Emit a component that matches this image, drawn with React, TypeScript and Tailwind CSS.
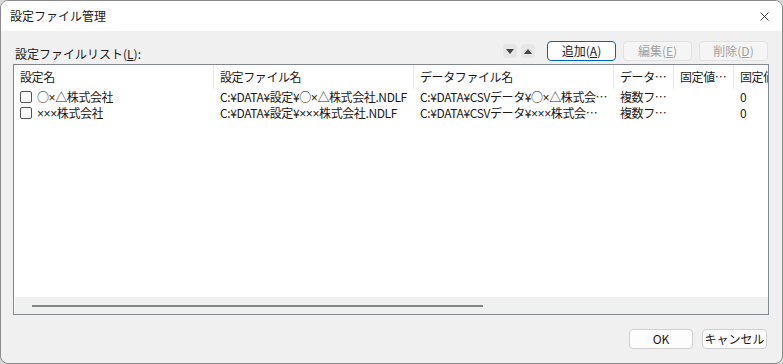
import { X } from 'lucide-react';

const font = "font-['Noto_Sans_CJK_JP','Noto_Sans',sans-serif]";

const columns = [
  { label: '設定名', w: 'w-[200px]' },
  { label: '設定ファイル名', w: 'w-[200px]' },
  { label: 'データファイル名', w: 'w-[200px]' },
  { label: 'データ選択方法', w: 'w-[60px]' },
  { label: '固定値設定', w: 'w-[60px]' },
  { label: '固定値', w: 'w-[60px]' },
];

const rows = [
  {
    name: '○×△株式会社',
    file: 'C:¥DATA¥設定¥○×△株式会社.NDLF',
    data: 'C:¥DATA¥CSVデータ¥○×△株式会社.csv',
    sel: '複数ファイル',
    fixed1: '',
    fixed2: '0',
  },
  {
    name: '×××株式会社',
    file: 'C:¥DATA¥設定¥×××株式会社.NDLF',
    data: 'C:¥DATA¥CSVデータ¥×××株式会社.csv',
    sel: '複数ファイル',
    fixed1: '',
    fixed2: '0',
  },
];

// the × sign is narrow in the original font, Noto CJK makes it full width
function Txt({ text }: { text: string }) {
  const parts = text.split(/(×)/);
  return (
    <>
      {parts.map((p, i) =>
        p === '×' ? (
          <span key={i} className="font-['Liberation_Sans',sans-serif]">×</span>
        ) : (
          <span key={i}>{p}</span>
        )
      )}
    </>
  );
}

function SmallArrow({ up }: { up?: boolean }) {
  return (
    <div className="w-[14px] h-[14px] rounded-[3px] bg-[#e6e6e6] flex items-center justify-center">
      <svg width="8" height="5" viewBox="0 0 8 5">
        {up ? <polygon points="0,5 8,5 4,0" fill="#444" /> : <polygon points="0,0 8,0 4,5" fill="#444" />}
      </svg>
    </div>
  );
}

function Btn({ children, primary, disabled, w = 'w-[69px]' }: { children: React.ReactNode; primary?: boolean; disabled?: boolean; w?: string }) {
  const cls = primary
    ? 'border-[#0067c0] bg-[#fdfdfd] text-[#1a1a1a]'
    : disabled
    ? 'border-[#e2e2e2] bg-[#f5f5f5] text-[#a2a2a2]'
    : 'border-[#d0d0d0] bg-[#fdfdfd] text-[#1a1a1a]';
  return (
    <div className={`${w} h-[20px] rounded-[4px] border flex items-center justify-center text-[12px] leading-none ${cls}`}>
      {children}
    </div>
  );
}

export default function App() {
  return (
    <div className={`w-[783px] h-[364px] bg-[#d8d8d8] ${font}`}>
      <div className="w-[783px] h-[364px] flex flex-col border border-[#8c8c8c] rounded-[8px] overflow-hidden bg-[#f0f0f0]">
        {/* title bar */}
        <div className="h-[30px] bg-white flex items-center justify-between pl-[9px] pr-[10px] shrink-0">
          <span className="text-[12px] text-[#1a1a1a]">設定ファイル管理</span>
          <X size={15} strokeWidth={1.3} className="text-[#1a1a1a]" />
        </div>

        <div className="flex-1 flex flex-col px-[12px] pt-[10px]">
          {/* toolbar */}
          <div className="h-[20px] flex items-end">
            <span className="text-[12px] leading-none pl-[2px] text-[#1a1a1a] mb-[1px]">
              設定ファイルリスト(<span className="underline">L</span>):
            </span>
            <div className="flex-1" />
            <div className="flex items-center gap-[4px] self-center mr-[12px]">
              <SmallArrow />
              <SmallArrow up />
            </div>
            <div className="flex gap-[7px] mr-[2px]">
              <Btn primary>追加(<span className="underline">A</span>)</Btn>
              <Btn disabled>編集(<span className="underline">E</span>)</Btn>
              <Btn disabled>削除(<span className="underline">D</span>)</Btn>
            </div>
          </div>

          {/* list */}
          <div className="mt-[3px] w-[756px] h-[251px] border border-[#828790] bg-white flex flex-col overflow-hidden">
            <div className="flex-1 overflow-hidden tracking-[-0.4px]">
              <div className="flex h-[24px] whitespace-nowrap">
                {columns.map((c, i) => (
                  <div
                    key={i}
                    className={`${c.w} shrink-0 h-full flex items-center pl-[6px] pr-[3px] text-[12px] text-[#1a1a1a] overflow-hidden ${
                      i < columns.length - 1 ? 'border-r border-[#e5e5e5]' : ''
                    }`}
                  >
                    <span className={i === columns.length - 1 ? 'overflow-hidden' : 'truncate'}>{c.label}</span>
                  </div>
                ))}
              </div>
              {rows.map((r, i) => (
                <div key={i} className="flex h-[16px] items-center text-[12px] text-[#1a1a1a] whitespace-nowrap leading-none">
                  <div className="w-[200px] shrink-0 flex items-center pl-[6px] gap-[5px] overflow-hidden">
                    <div className="w-[12px] h-[12px] rounded-[2px] border border-[#555] bg-white shrink-0" />
                    <span className="truncate"><Txt text={r.name} /></span>
                  </div>
                  <div className="w-[200px] shrink-0 pl-[6px] pr-[6px] truncate"><Txt text={r.file} /></div>
                  <div className="w-[200px] shrink-0 pl-[6px] pr-[6px] truncate"><Txt text={r.data} /></div>
                  <div className="w-[60px] shrink-0 pl-[6px] pr-[3px] truncate">{r.sel}</div>
                  <div className="w-[60px] shrink-0 pl-[6px] pr-[3px] truncate">{r.fixed1}</div>
                  <div className="w-[60px] shrink-0 pl-[6px] truncate">{r.fixed2}</div>
                </div>
              ))}
            </div>
            {/* horizontal scrollbar */}
            <div className="h-[17px] bg-[#f0f0f0] ml-[1px] flex items-center shrink-0">
              <div className="ml-[17px] w-[451px] h-[2px] bg-[#858585]" />
            </div>
          </div>

          {/* bottom buttons */}
          <div className="flex justify-end gap-[9px] mt-[14px] pr-[3px]">
            <Btn w="w-[64px]">OK</Btn>
            <Btn w="w-[65px]">キャンセル</Btn>
          </div>
        </div>
      </div>
    </div>
  );
}
